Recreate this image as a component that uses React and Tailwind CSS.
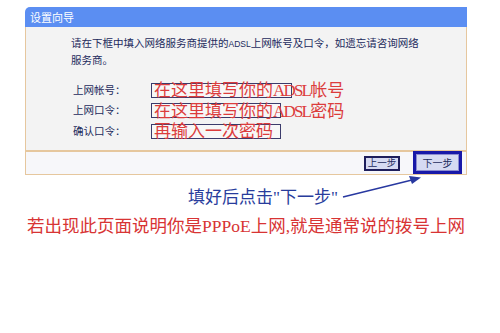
import React from "react";

const CJK = "font-['Noto_Sans_CJK_SC','Liberation_Sans',sans-serif]";
const SERIF = "font-['Liberation_Serif','Noto_Sans_CJK_SC',serif]";

function Row({ label, children, boxClass }) {
  return (
    <div className="flex h-[20px] items-center">
      <div className={`w-[80px] pl-[2px] text-[10.5px] leading-none text-[#1c2a5c] ${CJK}`}>{label}</div>
      <div className={`relative h-[15px] border border-[#3b3b6b] bg-[#f7f7f7] ${boxClass}`}>
        <span
          className={`absolute left-[2px] top-1/2 -translate-y-1/2 whitespace-nowrap text-[17px] leading-none text-[#dc3c3c] ${SERIF}`}
        >
          {children}
        </span>
      </div>
    </div>
  );
}

export default function App() {
  return (
    <div className="relative h-[333px] w-[500px] overflow-hidden bg-white">
      <div className="pl-[25px] pt-[7px]">
        <div className="w-[442px]">
          <div className={`h-[20px] rounded-tl-[5px] bg-[#5b8ef2] pl-[5px] text-[11px] leading-[20px] text-white ${CJK}`}>
            设置向导
          </div>
          <div className="h-[123px] border-x border-[#e6c79e] bg-[#f3f3f3] pl-[45px] pt-[8px]">
            <div className={`whitespace-nowrap text-[10.5px] leading-[16px] text-[#1c2a5c] ${CJK}`}>
              请在下框中填入网络服务商提供的<span className="font-['Liberation_Sans',sans-serif] text-[8.5px]">ADSL</span>上网帐号及口令，如遗忘请咨询网络
              <br />
              服务商。
            </div>
            <div className="mt-[12px] flex flex-col gap-[0.5px]">
              <Row label="上网帐号：" boxClass="w-[141px]">
                在这里填写你的<span className="tracking-[-1.8px]">ADSL</span>帐号
              </Row>
              <Row label="上网口令：" boxClass="w-[130px]">
                在这里填写你的<span className="tracking-[-1.8px]">ADSL</span>密码
              </Row>
              <Row label="确认口令：" boxClass="w-[130px]">
                再输入一次密码
              </Row>
            </div>
          </div>
          <div className="flex h-[25px] items-center justify-end gap-[13px] border-x border-b border-t-2 border-[#e6c79e] bg-[#f7f7fa] pr-[4px]">
            <div
              className={`flex h-[15px] w-[36px] items-center justify-center whitespace-nowrap border-2 border-[#1e1e5c] bg-[#d6daf2] text-[9.5px] leading-none text-[#1c2a5c] ${CJK}`}
            >
              上一步
            </div>
            <div className="-mt-[1px] h-[23px] w-[49px] border-[3px] border-[#1818a8] bg-[#d6daf2]">
              <div
                className={`flex h-full w-full items-center justify-center whitespace-nowrap border border-[#8c8cd0] text-[10px] leading-none text-[#1c2a5c] ${CJK}`}
              >
                下一步
              </div>
            </div>
          </div>
        </div>
      </div>
      <div className={`mt-[13px] whitespace-nowrap pl-[188px] text-[17px] leading-[20px] text-[#283c9c] ${SERIF}`}>
        填好后点击"下一步"
      </div>
      <div className={`mt-[7px] whitespace-nowrap pl-[27px] text-[17.5px] leading-[22px] text-[#d83434] ${SERIF}`}>
        若出现此页面说明你是PPPoE上网,就是通常说的拨号上网
      </div>
      <svg className="absolute left-0 top-0" width="500" height="333" viewBox="0 0 500 333">
        <line x1="343" y1="197" x2="412" y2="180" stroke="#2838a0" strokeWidth="1.4" />
        <polygon points="421,177.5 409,176 412,184" fill="#2838a0" />
      </svg>
    </div>
  );
}
